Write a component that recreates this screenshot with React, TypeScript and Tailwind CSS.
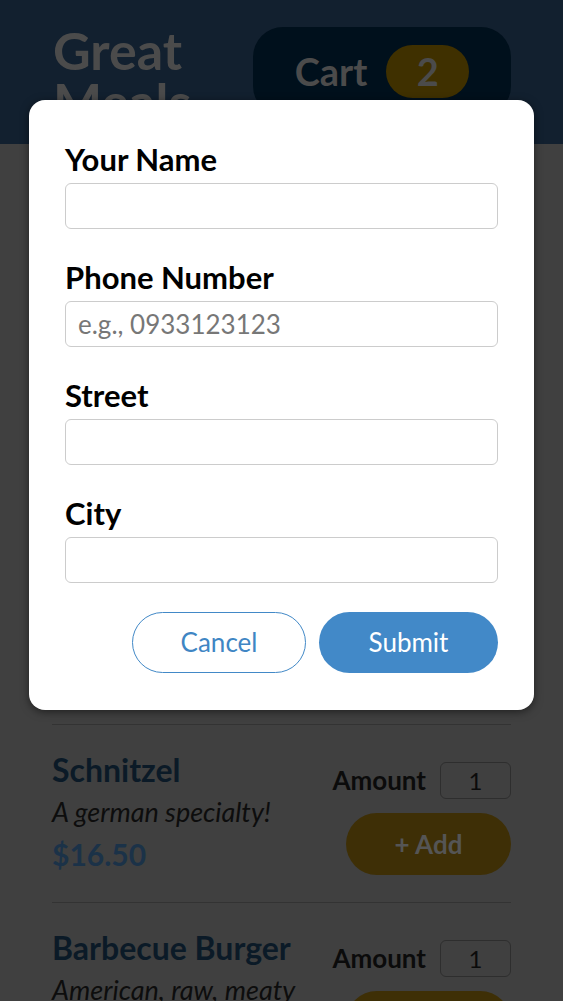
import React from "react";

const meals = [
  { name: "Sushi", desc: "Finest fish and veggies", price: "$22.99" },
  { name: "Schnitzel", desc: "A german specialty!", price: "$16.50" },
  { name: "Barbecue Burger", desc: "American, raw, meaty", price: "$12.99" },
];

function Field({ label, placeholder }: { label: string; placeholder?: string }) {
  return (
    <div className="mb-[29px]">
      <label className="block text-[31px] leading-[38px] font-bold text-black mb-[5px]">{label}</label>
      <input
        placeholder={placeholder}
        className="block w-full h-[46px] border border-[#cccccc] rounded-[6px] px-[12px] text-[26px] text-black placeholder:text-[#777777] outline-none"
      />
    </div>
  );
}

export default function App() {
  return (
    <div
      className="relative w-full h-[1001px] overflow-hidden bg-[#404040]"
      style={{ fontFamily: "Lato, 'Noto Sans', sans-serif" }}
    >
      <header className="h-[144px] bg-[#12202f] flex items-start justify-between pl-[53px] pr-[52px] pt-[27px]">
        <h1 className="text-[52px] leading-[51px] font-bold text-[#4b4b4b] mt-[-2px]">
          Great
          <br />
          Meals
        </h1>
        <div className="h-[89px] w-[258px] rounded-[30px] bg-[#00101c] flex items-center justify-center gap-[19px]">
          <span className="text-[38px] font-bold text-[#4b4b4b]">Cart</span>
          <span className="h-[53px] w-[83px] rounded-full bg-[#3f3000] flex items-center justify-center text-[38px] font-bold text-[#4b4b4b]">
            2
          </span>
        </div>
      </header>

      <main className="px-[52px] pt-[403px]">
        <ul>
          {meals.map((m) => (
            <li key={m.name} className="h-[178px] border-b border-[#333333] flex items-center justify-between">
              <div className="flex flex-col mt-[-4px]">
                <h3 className="text-[32px] leading-[42px] font-bold text-[#0b1a27]">{m.name}</h3>
                <p className="text-[27px] leading-[42px] italic text-[#0d0d0d]">{m.desc}</p>
                <p className="text-[30px] leading-[42px] font-bold text-[#1b3248]">{m.price}</p>
              </div>
              <div className="flex flex-col items-end mt-[9px]">
                <div className="flex items-center gap-[14px]">
                  <span className="text-[26px] font-bold text-[#0b0b0b]">Amount</span>
                  <div className="w-[71px] h-[37px] border border-[#2e2e2e] rounded-[6px] flex items-center justify-center text-[24px] text-[#0b0b0b]">
                    1
                  </div>
                </div>
                <button className="mt-[13px] w-[165px] h-[62px] rounded-full bg-[#3e2f06] text-[26px] font-bold text-[#555555]">
                  + Add
                </button>
              </div>
            </li>
          ))}
        </ul>
      </main>

      <div className="absolute left-[29px] top-[100px] w-[505px] h-[610px] bg-white rounded-[16px] shadow-[0_2px_8px_rgba(0,0,0,0.5)] px-[36px] pt-[40px]">
        <Field label="Your Name" />
        <Field label="Phone Number" placeholder="e.g., 0933123123" />
        <Field label="Street" />
        <Field label="City" />
        <div className="flex justify-end gap-[13px] mt-[1px]">
          <button className="w-[174px] h-[61px] rounded-full border border-[#4289c7] text-[26px] text-[#3f86c4] bg-white">
            Cancel
          </button>
          <button className="w-[179px] h-[61px] rounded-full bg-[#4289c8] text-[26px] text-white">
            Submit
          </button>
        </div>
      </div>
    </div>
  );
}
